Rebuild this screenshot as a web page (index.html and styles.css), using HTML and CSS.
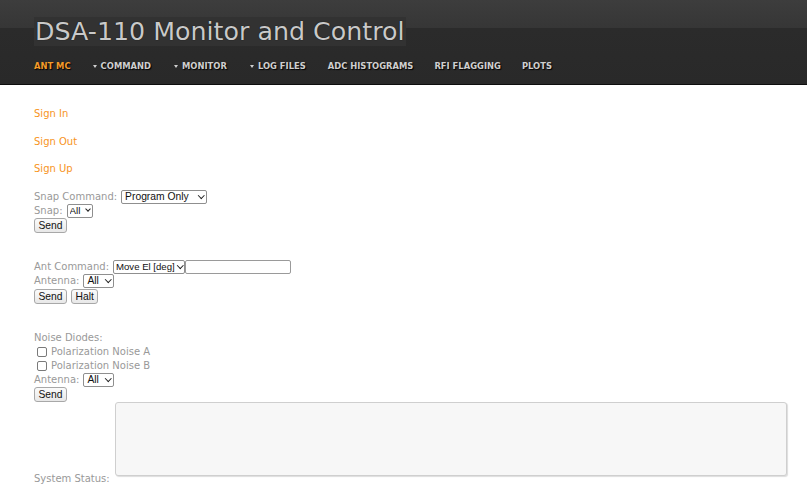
FILE: index.html
```html
<!DOCTYPE html>
<html lang="en">
<head>
<meta charset="utf-8">
<title>DSA-110 Monitor and Control</title>
<link rel="stylesheet" href="styles.css">
</head>
<body>
<header class="masthead">
  <h1 class="title">DSA-110 Monitor and Control</h1>
  <nav class="nav">
    <a class="nav-item active" href="#">ANT MC</a>
    <a class="nav-item drop" href="#"><span class="caret"></span>COMMAND</a>
    <a class="nav-item drop" href="#"><span class="caret"></span>MONITOR</a>
    <a class="nav-item drop" href="#"><span class="caret"></span>LOG FILES</a>
    <a class="nav-item" href="#">ADC HISTOGRAMS</a>
    <a class="nav-item" href="#">RFI FLAGGING</a>
    <a class="nav-item" href="#">PLOTS</a>
  </nav>
</header>
<main class="content">
  <div class="auth">
    <a href="#" class="link">Sign In</a>
    <a href="#" class="link">Sign Out</a>
    <a href="#" class="link">Sign Up</a>
  </div>

  <form class="block first">
    <div class="row"><label class="lbl">Snap Command:</label><span class="sel w-prog"><select><option>Program Only</option></select></span></div>
    <div class="row"><label class="lbl">Snap:</label><span class="sel w-all-s"><select><option>All</option></select></span></div>
    <div class="row"><button type="button" class="btn">Send</button></div>
  </form>

  <form class="block">
    <div class="row"><label class="lbl">Ant Command:</label><span class="pair"><span class="sel w-move"><select><option>Move El [deg]</option></select></span><input class="txt" type="text"></span></div>
    <div class="row"><label class="lbl">Antenna:</label><span class="sel w-all"><select><option>All</option></select></span></div>
    <div class="row btns"><button type="button" class="btn">Send</button><button type="button" class="btn">Halt</button></div>
  </form>

  <form class="block">
    <div class="row"><span class="lbl">Noise Diodes:</span></div>
    <div class="row"><label class="lbl chk"><input type="checkbox" class="box">Polarization Noise A</label></div>
    <div class="row"><label class="lbl chk"><input type="checkbox" class="box">Polarization Noise B</label></div>
    <div class="row"><label class="lbl">Antenna:</label><span class="sel w-all"><select><option>All</option></select></span></div>
    <div class="row"><button type="button" class="btn">Send</button></div>
  </form>

  <div class="status">
    <label class="lbl">System Status:</label>
    <textarea class="area" readonly></textarea>
  </div>
</main>
</body>
</html>
```

FILE: styles.css
```css
html, body {
  margin: 0;
  padding: 0;
  background: #fff;
}
body {
  font-family: "DejaVu Sans", Verdana, sans-serif;
  font-size: 10px;
  color: #999;
}

.masthead {
  height: 84px;
  border-bottom: 1px solid #0e0e0e;
  background: linear-gradient(#3d3d3d 0, #363636 28px, #2b2b2b 28px, #292929 100%);
  padding-left: 34px;
  box-sizing: content-box;
  display: flex;
  flex-direction: column;
  align-items: flex-start;
}
.title {
  margin: 17px 0 0 0;
  padding: 0 1px 0 1px;
  font-weight: normal;
  font-size: 25.3px;
  line-height: 29px;
  height: 29px;
  color: #c9c9c9;
  background: #323232;
  text-shadow: 0 0 1px #000;
}
.nav {
  display: flex;
  gap: 21px;
  margin-top: 14px;
  height: 12px;
  align-items: center;
}
.nav-item {
  font-weight: bold;
  font-size: 8.4px;
  line-height: 12px;
  color: #cfcfcf;
  text-decoration: none;
  text-shadow: 1px 1px 1px #000;
  display: flex;
  align-items: center;
}
.nav-item.active { color: #f39a2a; }
.nav-item.drop { margin-left: 1px; margin-right: 1px; }
.caret {
  width: 0;
  height: 0;
  border-left: 2.5px solid transparent;
  border-right: 2.5px solid transparent;
  border-top: 3px solid #cfcfcf;
  margin-right: 4px;
}

.content {
  padding: 22px 20px 0 34px;
}
.auth {
  display: flex;
  flex-direction: column;
  gap: 13.5px;
  align-items: flex-start;
}
.link {
  color: #f7941d;
  text-decoration: none;
  line-height: 14px;
}

.block {
  margin: 28px 0 0 0;
  display: flex;
  flex-direction: column;
}
.block.first { margin-top: 14px; }
.row {
  display: flex;
  align-items: center;
  gap: 4px;
  height: 14px;
  line-height: 14px;
}
.row.btns { margin-top: 1px; }
.lbl { color: #999; white-space: nowrap; }
.chk { display: flex; align-items: center; }

.pair { display: flex; align-items: center; }

.sel {
  position: relative;
  display: inline-block;
  height: 14px;
}
.sel select {
  appearance: none;
  -webkit-appearance: none;
  height: 14px;
  margin: 0;
  padding: 0 0 0 3px;
  border: 1px solid #8f8f8f;
  border-radius: 2px;
  background: #fff;
  color: #111;
  font-family: "Liberation Sans", Arial, sans-serif;
  font-size: 10.3px;
  line-height: 12px;
  display: block;
  box-sizing: border-box;
  width: 100%;
}
.sel::after {
  content: "";
  position: absolute;
  right: 4px;
  top: 2.5px;
  width: 3.5px;
  height: 3.5px;
  border-right: 1.5px solid #222;
  border-bottom: 1.5px solid #222;
  transform: rotate(45deg);
  pointer-events: none;
}
.w-prog { width: 86px; }
.w-all-s { width: 26px; }
.w-all-s select { padding-left: 2px; font-size: 9.8px; }
.w-all-s::after { right: 3px; width: 3px; height: 3px; }
.w-all { width: 31px; }
.w-move { width: 72px; }
.w-move select { padding-left: 2px; font-size: 9.6px; }
.w-move::after { right: 3px; }

.txt {
  width: 106px;
  height: 14px;
  box-sizing: border-box;
  margin: 0;
  padding: 0 3px;
  border: 1px solid #9a9a9a;
  border-radius: 2px;
  background: #fff;
  font-family: "Liberation Sans", Arial, sans-serif;
  font-size: 10px;
}

.btn {
  appearance: none;
  -webkit-appearance: none;
  height: 15px;
  margin: 0;
  padding: 0 3.5px;
  border: 1px solid #a8a8a8;
  border-radius: 3px;
  background: linear-gradient(#fbfbfb, #e8e8e8);
  color: #111;
  font-family: "Liberation Sans", Arial, sans-serif;
  font-size: 10.3px;
  line-height: 13px;
}

.box {
  appearance: none;
  -webkit-appearance: none;
  width: 10px;
  height: 10px;
  margin: 0 4px 0 3px;
  border: 1px solid #7a7a7a;
  border-radius: 2px;
  background: #fff;
}

.status {
  display: flex;
  align-items: flex-end;
  gap: 5px;
  margin-top: 1px;
}
.status .lbl { line-height: 14px; }
.area {
  flex: 1;
  height: 74px;
  box-sizing: border-box;
  margin: 0 0 10px 0;
  border: 1px solid #cfcfcf;
  border-radius: 3px;
  background: #f7f7f7;
  box-shadow: 1px 1px 1px #ddd;
  resize: none;
}
```
